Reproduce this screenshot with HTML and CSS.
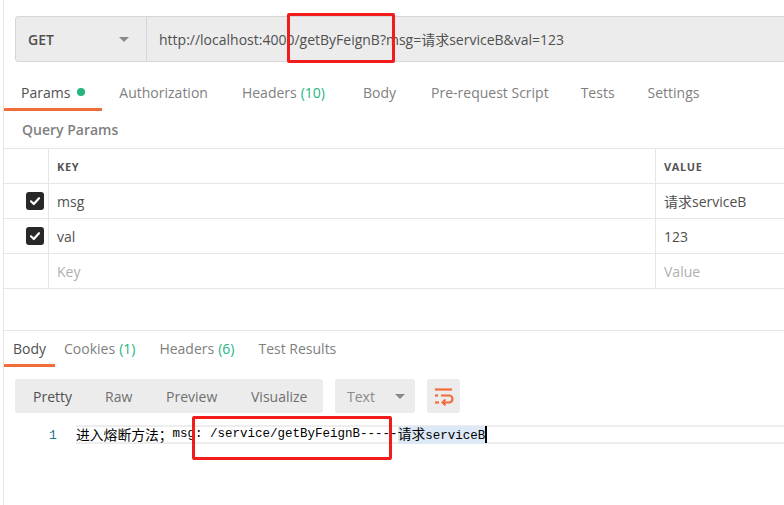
FILE: index.html
```html
<!DOCTYPE html>
<html>
<head>
<meta charset="utf-8">
<link rel="stylesheet" href="styles.css">
</head>
<body>
<div class="app">
  <div class="urlbar">
    <div class="method"><span>GET</span><span class="caret"></span></div>
    <div class="url">http://localhost:4000/getByFeignB?msg=请求serviceB&amp;val=123</div>
  </div>

  <div class="tabs">
    <div class="tab active">Params<span class="dot"></span></div>
    <div class="tab">Authorization</div>
    <div class="tab">Headers <span class="count">(10)</span></div>
    <div class="tab t-body">Body</div>
    <div class="tab t-pre">Pre-request Script</div>
    <div class="tab t-tests">Tests</div>
    <div class="tab">Settings</div>
  </div>

  <div class="qp-title">Query Params</div>

  <div class="params">
    <div class="row head">
      <div class="cell chk"></div>
      <div class="cell key">KEY</div>
      <div class="cell val">VALUE</div>
    </div>
    <div class="row">
      <div class="cell chk"><span class="box"><svg width="12" height="12" viewBox="0 0 12 12"><path d="M2 6.3 L4.8 9 L10 3.2" fill="none" stroke="#fff" stroke-width="2.2" stroke-linecap="round" stroke-linejoin="round"/></svg></span></div>
      <div class="cell key">msg</div>
      <div class="cell val">请求serviceB</div>
    </div>
    <div class="row">
      <div class="cell chk"><span class="box"><svg width="12" height="12" viewBox="0 0 12 12"><path d="M2 6.3 L4.8 9 L10 3.2" fill="none" stroke="#fff" stroke-width="2.2" stroke-linecap="round" stroke-linejoin="round"/></svg></span></div>
      <div class="cell key">val</div>
      <div class="cell val">123</div>
    </div>
    <div class="row">
      <div class="cell chk"></div>
      <div class="cell key ph">Key</div>
      <div class="cell val ph">Value</div>
    </div>
  </div>

  <div class="spacer"></div>

  <div class="resp">
    <div class="rtabs">
      <div class="rtab active">Body</div>
      <div class="rtab first">Cookies <span class="count">(1)</span></div>
      <div class="rtab">Headers <span class="count">(6)</span></div>
      <div class="rtab">Test Results</div>
    </div>

    <div class="toolbar">
      <div class="modes">
        <div class="mode m1">Pretty</div>
        <div class="mode m2">Raw</div>
        <div class="mode m3">Preview</div>
        <div class="mode m4">Visualize</div>
      </div>
      <div class="fmt"><span>Text</span><span class="caret"></span></div>
      <div class="wrap">
        <svg width="22" height="20" viewBox="0 0 22 20">
          <path d="M2 3.5 H19" stroke="#f26b3a" stroke-width="2.2" fill="none"/>
          <path d="M2 9.5 H5" stroke="#f26b3a" stroke-width="2.2" fill="none"/>
          <path d="M8 9.5 H16 a3.5 3.5 0 0 1 0 7 H10" stroke="#f26b3a" stroke-width="2.2" fill="none"/>
          <path d="M12.5 13.5 L9.5 16.5 L12.5 19.3" stroke="#f26b3a" stroke-width="2" fill="none"/>
          <path d="M2 16.5 H6" stroke="#f26b3a" stroke-width="2.2" fill="none"/>
        </svg>
      </div>
    </div>

    <div class="code">
      <div class="gutter">1</div>
      <div class="line"><span class="cjk">进入熔断方法；</span>msg: /service/getByFeignB-----<span class="sel"><span class="cjk">请求</span>serviceB</span><span class="cursor"></span></div>
    </div>
  </div>

  <div class="mark mark1"></div>
  <div class="mark mark2"></div>
</div>
</body>
</html>
```

FILE: styles.css
```css
* { box-sizing: border-box; }
html, body { margin: 0; padding: 0; background: #fff; }
body {
  font-family: "Open Sans", "Noto Sans CJK SC", sans-serif;
  font-size: 14px;
  color: #505050;
  overflow: hidden;
}
.app {
  position: relative;
  margin-left: 3px;
  border-left: 1px solid #e3e3e3;
  height: 505px;
  overflow: hidden;
}

/* URL bar */
.urlbar {
  display: flex;
  height: 46px;
  margin: 16px 0 0 11px;
}
.method {
  width: 132px;
  flex: none;
  background: #ececec;
  border: 1px solid #d6d6d6;
  border-radius: 3px 0 0 3px;
  display: flex;
  align-items: center;
  justify-content: space-between;
  padding: 0 17px 0 12px;
  font-weight: 600;
  color: #505050;
}
.caret {
  width: 0; height: 0;
  border-left: 5px solid transparent;
  border-right: 5px solid transparent;
  border-top: 5px solid #8a8a8a;
}
.url {
  flex: 1;
  background: #ececec;
  border: 1px solid #d6d6d6;
  border-left: none;
  border-right: none;
  display: flex;
  align-items: center;
  padding-left: 12px;
  white-space: nowrap;
  color: #505050;
}

/* tabs */
.tabs {
  display: flex;
  height: 35px;
  margin-top: 14px;
}
.tab {
  display: flex;
  align-items: center;
  padding: 0 17px;
  border-bottom: 3px solid transparent;
  color: #808080;
  white-space: nowrap;
}
.tab.t-body { padding: 0 19px 0 21px; }
.tab.t-pre { padding: 0 15px 0 16px; }
.tab.t-tests { padding: 0 16px 0 17px; }
.tab.active {
  color: #505050;
  border-bottom-color: #f26b3a;
}
.dot {
  width: 8px; height: 8px;
  border-radius: 50%;
  background: #26b47f;
  margin-left: 7px;
}
.count { color: #26b47f; margin-left: 4px; }

.qp-title {
  height: 37px;
  line-height: 37px;
  padding-left: 18px;
  color: #808080;
  font-weight: 600;
}

/* params table */
.params { border-top: 1px solid #e6e6e6; }
.row {
  display: grid;
  grid-template-columns: 45px 607px 1fr;
  height: 35px;
  border-bottom: 1px solid #e6e6e6;
}
.cell {
  display: flex;
  align-items: center;
  padding-left: 8px;
  white-space: nowrap;
}
.cell.chk, .cell.key { border-right: 1px solid #e6e6e6; }
.cell.chk { padding-left: 22px; }
.row.head .cell.key, .row.head .cell.val {
  font-size: 11px;
  font-weight: 700;
  letter-spacing: 0.6px;
  color: #555;
  padding-top: 1px;
}
.ph { color: #b0b0b0; }
.box {
  width: 18px; height: 18px;
  border-radius: 3px;
  background: #282828;
  display: flex;
  align-items: center;
  justify-content: center;
}

.spacer { height: 41px; }

/* response */
.resp { border-top: 1px solid #e6e6e6; }
.rtabs {
  display: flex;
  height: 36px;
}
.rtab {
  display: flex;
  align-items: center;
  padding: 2px 12px 0;
  border-bottom: 3px solid transparent;
  color: #808080;
  white-space: nowrap;
}
.rtab.first { padding-left: 9px; }
.rtab.active {
  padding: 2px 9px 0;
  color: #505050;
  border-bottom-color: #f26b3a;
}

.toolbar {
  display: flex;
  gap: 12px;
  height: 34px;
  margin-top: 12px;
  padding-left: 11px;
}
.modes {
  display: flex;
  background: #ececec;
  border-radius: 3px;
  width: 308px;
}
.mode {
  display: flex;
  align-items: center;
  padding-left: 18px;
  color: #707070;
}
.mode.m1 { width: 72px; color: #505050; }
.mode.m2 { width: 61px; }
.mode.m3 { width: 85px; }
.mode.m4 { width: 90px; }
.fmt {
  width: 80px;
  background: #ececec;
  border-radius: 3px;
  display: flex;
  align-items: center;
  justify-content: space-between;
  padding: 0 10px 0 12px;
  color: #8a8a8a;
}
.wrap {
  width: 33px;
  background: #ececec;
  border-radius: 3px;
  display: flex;
  align-items: center;
  justify-content: center;
}

.code {
  display: flex;
  margin-top: 12px;
  height: 19px;
}
.gutter {
  width: 72px;
  flex: none;
  padding-left: 45px;
  font-family: "Liberation Mono", monospace;
  font-size: 13px;
  line-height: 17px;
  color: #237893;
  padding-top: 2px;
}
.line {
  flex: 1;
  border-top: 2px solid #ededed;
  border-bottom: 2px solid #ededed;
  font-family: "Liberation Mono", "Noto Sans CJK SC", monospace;
  font-size: 12.5px;
  line-height: 15px;
  color: #000;
  white-space: nowrap;
  display: flex;
  align-items: center;
}
.cjk {
  font-family: "Noto Sans CJK SC", sans-serif;
  font-size: 13.8px;
  line-height: 15px;
}
.sel { background: #dde9f6; }
.cursor {
  width: 2px;
  height: 17px;
  background: #000;
}

/* annotation marks */
.mark {
  position: absolute;
  border: 3px solid #f21c1c;
  border-radius: 2px;
}
.mark1 { left: 283px; top: 13px; width: 108px; height: 50px; }
.mark2 { left: 188px; top: 416px; width: 200px; height: 44px; }
```
